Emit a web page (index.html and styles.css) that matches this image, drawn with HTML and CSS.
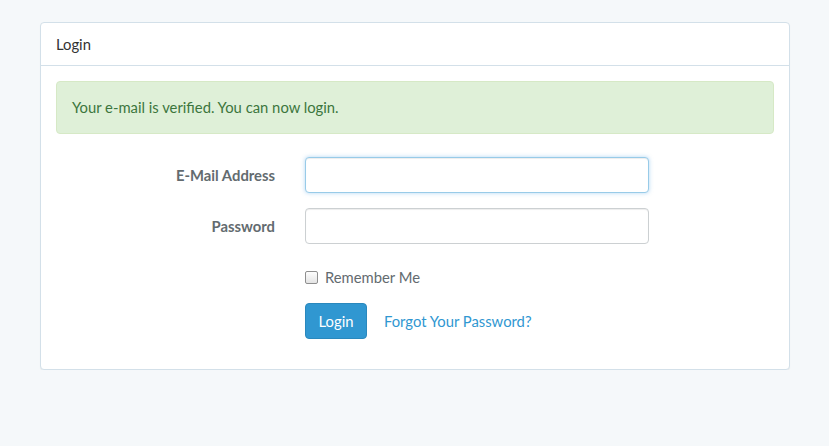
FILE: index.html
```html
<!DOCTYPE html>
<html>
<head>
<meta charset="utf-8">
<link rel="stylesheet" href="styles.css">
</head>
<body>
<div class="page">
  <div class="panel">
    <div class="panel-heading">Login</div>
    <div class="panel-body">
      <div class="alert">Your e-mail is verified. You can now login.</div>
      <form class="form">
        <div class="form-group">
          <label class="control-label">E-Mail Address</label>
          <div class="field"><input class="input focus" type="email"></div>
        </div>
        <div class="form-group">
          <label class="control-label">Password</label>
          <div class="field"><input class="input" type="password"></div>
        </div>
        <div class="form-group">
          <div class="control-label"></div>
          <div class="field"><label class="checkbox"><span class="box"></span>Remember Me</label></div>
        </div>
        <div class="form-group last">
          <div class="control-label"></div>
          <div class="field actions"><button type="button" class="btn">Login</button><a class="link" href="#">Forgot Your Password?</a></div>
        </div>
      </form>
    </div>
  </div>
</div>
</body>
</html>
```
FILE: styles.css
```css
* { box-sizing: border-box; }
html, body { margin: 0; padding: 0; }
body {
  background: #f5f8fa;
  font-family: "Lato", "Open Sans", sans-serif;
  font-size: 14.8px;
  line-height: 22.4px;
  color: #636b6f;
}
.page { padding: 22px 39px 0 40px; }
.panel {
  width: 750px;
  background: #fff;
  border: 1px solid #d3e0e9;
  border-radius: 4px;
  box-shadow: 0 1px 1px rgba(0,0,0,0.05);
}
.panel-heading {
  padding: 10px 15px;
  border-bottom: 1px solid #d3e0e9;
  color: #333;
}
.panel-body { padding: 15px; }
.alert {
  background: #dff0d8;
  border: 1px solid #d6e9c6;
  color: #3c763d;
  border-radius: 4px;
  padding: 15px;
  margin-bottom: 23px;
  line-height: 21px;
}
.form { display: flex; flex-direction: column; gap: 15px; margin: 0 -15px; }
.form-group { display: flex; align-items: flex-start; }
.control-label {
  width: 249px;
  padding: 7px 15px 0;
  text-align: right;
  font-weight: 700;
  color: #636b6f;
}
.field { width: 374px; padding: 0 15px; }
.input {
  display: block;
  width: 344px;
  height: 36px;
  border: 1px solid #ccd0d2;
  border-radius: 4px;
  box-shadow: inset 0 1px 1px rgba(0,0,0,0.075);
  background: #fff;
  margin: 0;
}
.input.focus {
  border-color: #98cbe8;
  box-shadow: inset 0 1px 1px rgba(0,0,0,0.075), 0 0 4px rgba(102,175,233,0.5);
}
.checkbox { display: flex; align-items: center; gap: 7px; padding-top: 7px; height: 29px; }
.box {
  width: 13px; height: 13px;
  border: 1px solid #8f8f8f;
  border-radius: 2px;
  background: linear-gradient(#fdfdfd, #e4e4e4);
}
.actions { display: flex; align-items: center; gap: 17px; }
.btn {
  font-family: inherit;
  font-size: 14.8px;
  color: #fff;
  background: #3097d1;
  border: 1px solid #2a88bd;
  border-radius: 4px;
  padding: 6px 12px;
  line-height: 22px;
  height: 36px;
  width: 62px;
}
.link { color: #3097d1; text-decoration: none; }
.form-group.last { margin-bottom: 15px; }
```
